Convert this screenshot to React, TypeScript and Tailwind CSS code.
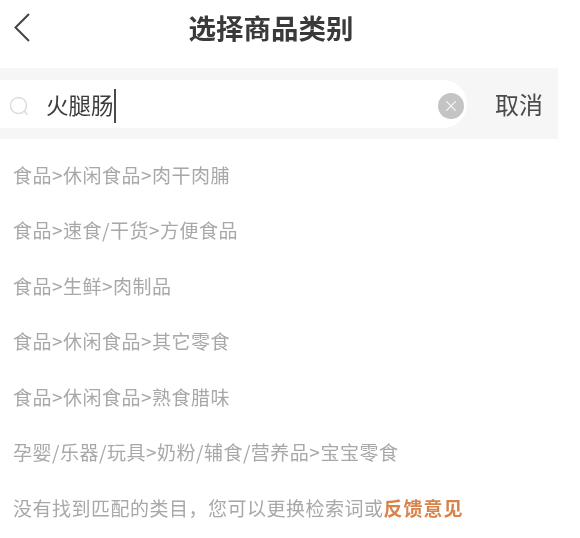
import { X } from "lucide-react"

const categories = [
  "食品>休闲食品>肉干肉脯",
  "食品>速食/干货>方便食品",
  "食品>生鲜>肉制品",
  "食品>休闲食品>其它零食",
  "食品>休闲食品>熟食腊味",
  "孕婴/乐器/玩具>奶粉/辅食/营养品>宝宝零食",
]

export default function App() {
  return (
    <div className="h-[538px] w-[580px] overflow-hidden bg-white blur-[0.5px] font-['Noto_Sans_CJK_SC',sans-serif]">
      {/* Header */}
      <div className="relative flex h-[68px] items-start justify-center pt-[9px] pr-[38px]">
        <svg className="absolute left-[13px] top-[12px]" width="18" height="32" viewBox="0 0 18 32" fill="none">
          <path d="M16 2 L2.5 15.5 L16 29" stroke="#444" strokeWidth="2" />
        </svg>
        <h1 className="text-[27.5px] leading-[36px] font-bold text-[#3a3a3a]">选择商品类别</h1>
      </div>

      {/* Search */}
      <div className="flex h-[71px] w-[558px] items-center bg-[#f6f6f6]">
        <div className="flex h-[48px] w-[467px] items-center rounded-r-[24px] bg-white pl-[9px] pr-[3px] pt-[4px]">
          <svg width="20" height="20" viewBox="0 0 20 20" fill="none" className="shrink-0">
            <circle cx="9.5" cy="9.5" r="8" stroke="#dcdcdc" strokeWidth="1.5" />
            <path d="M15 15 L18.5 18.5" stroke="#dcdcdc" strokeWidth="1.5" />
          </svg>
          <span className="ml-[17px] pb-[4px] text-[22.5px] leading-[30px] text-[#3c3c3c]">火腿肠</span>
          <span className="h-[34px] w-[2px] bg-[#4a4a4a]" />
          <span className="ml-auto flex h-[26px] w-[26px] items-center justify-center rounded-full bg-[#c4c4c4]">
            <X size={18} strokeWidth={1.5} color="#f2f2f2" />
          </span>
        </div>
        <span className="ml-[28px] text-[24px] leading-[30px] text-[#4a4a4a]">取消</span>
      </div>

      {/* Results */}
      <ul className="flex flex-col gap-[31px] px-[13px] pt-[23.5px]">
        {categories.map((c) => (
          <li key={c} className="text-[19px] leading-[24.5px] tracking-[0.5px] text-[#a8a8a8]">
            {c}
          </li>
        ))}
        <li className="text-[19px] leading-[24.5px] tracking-[0.5px] text-[#a8a8a8]">
          没有找到匹配的类目，您可以更换检索词或<span className="font-bold tracking-[1px] text-[#d9824a]">反馈意见</span>
        </li>
      </ul>
    </div>
  )
}
